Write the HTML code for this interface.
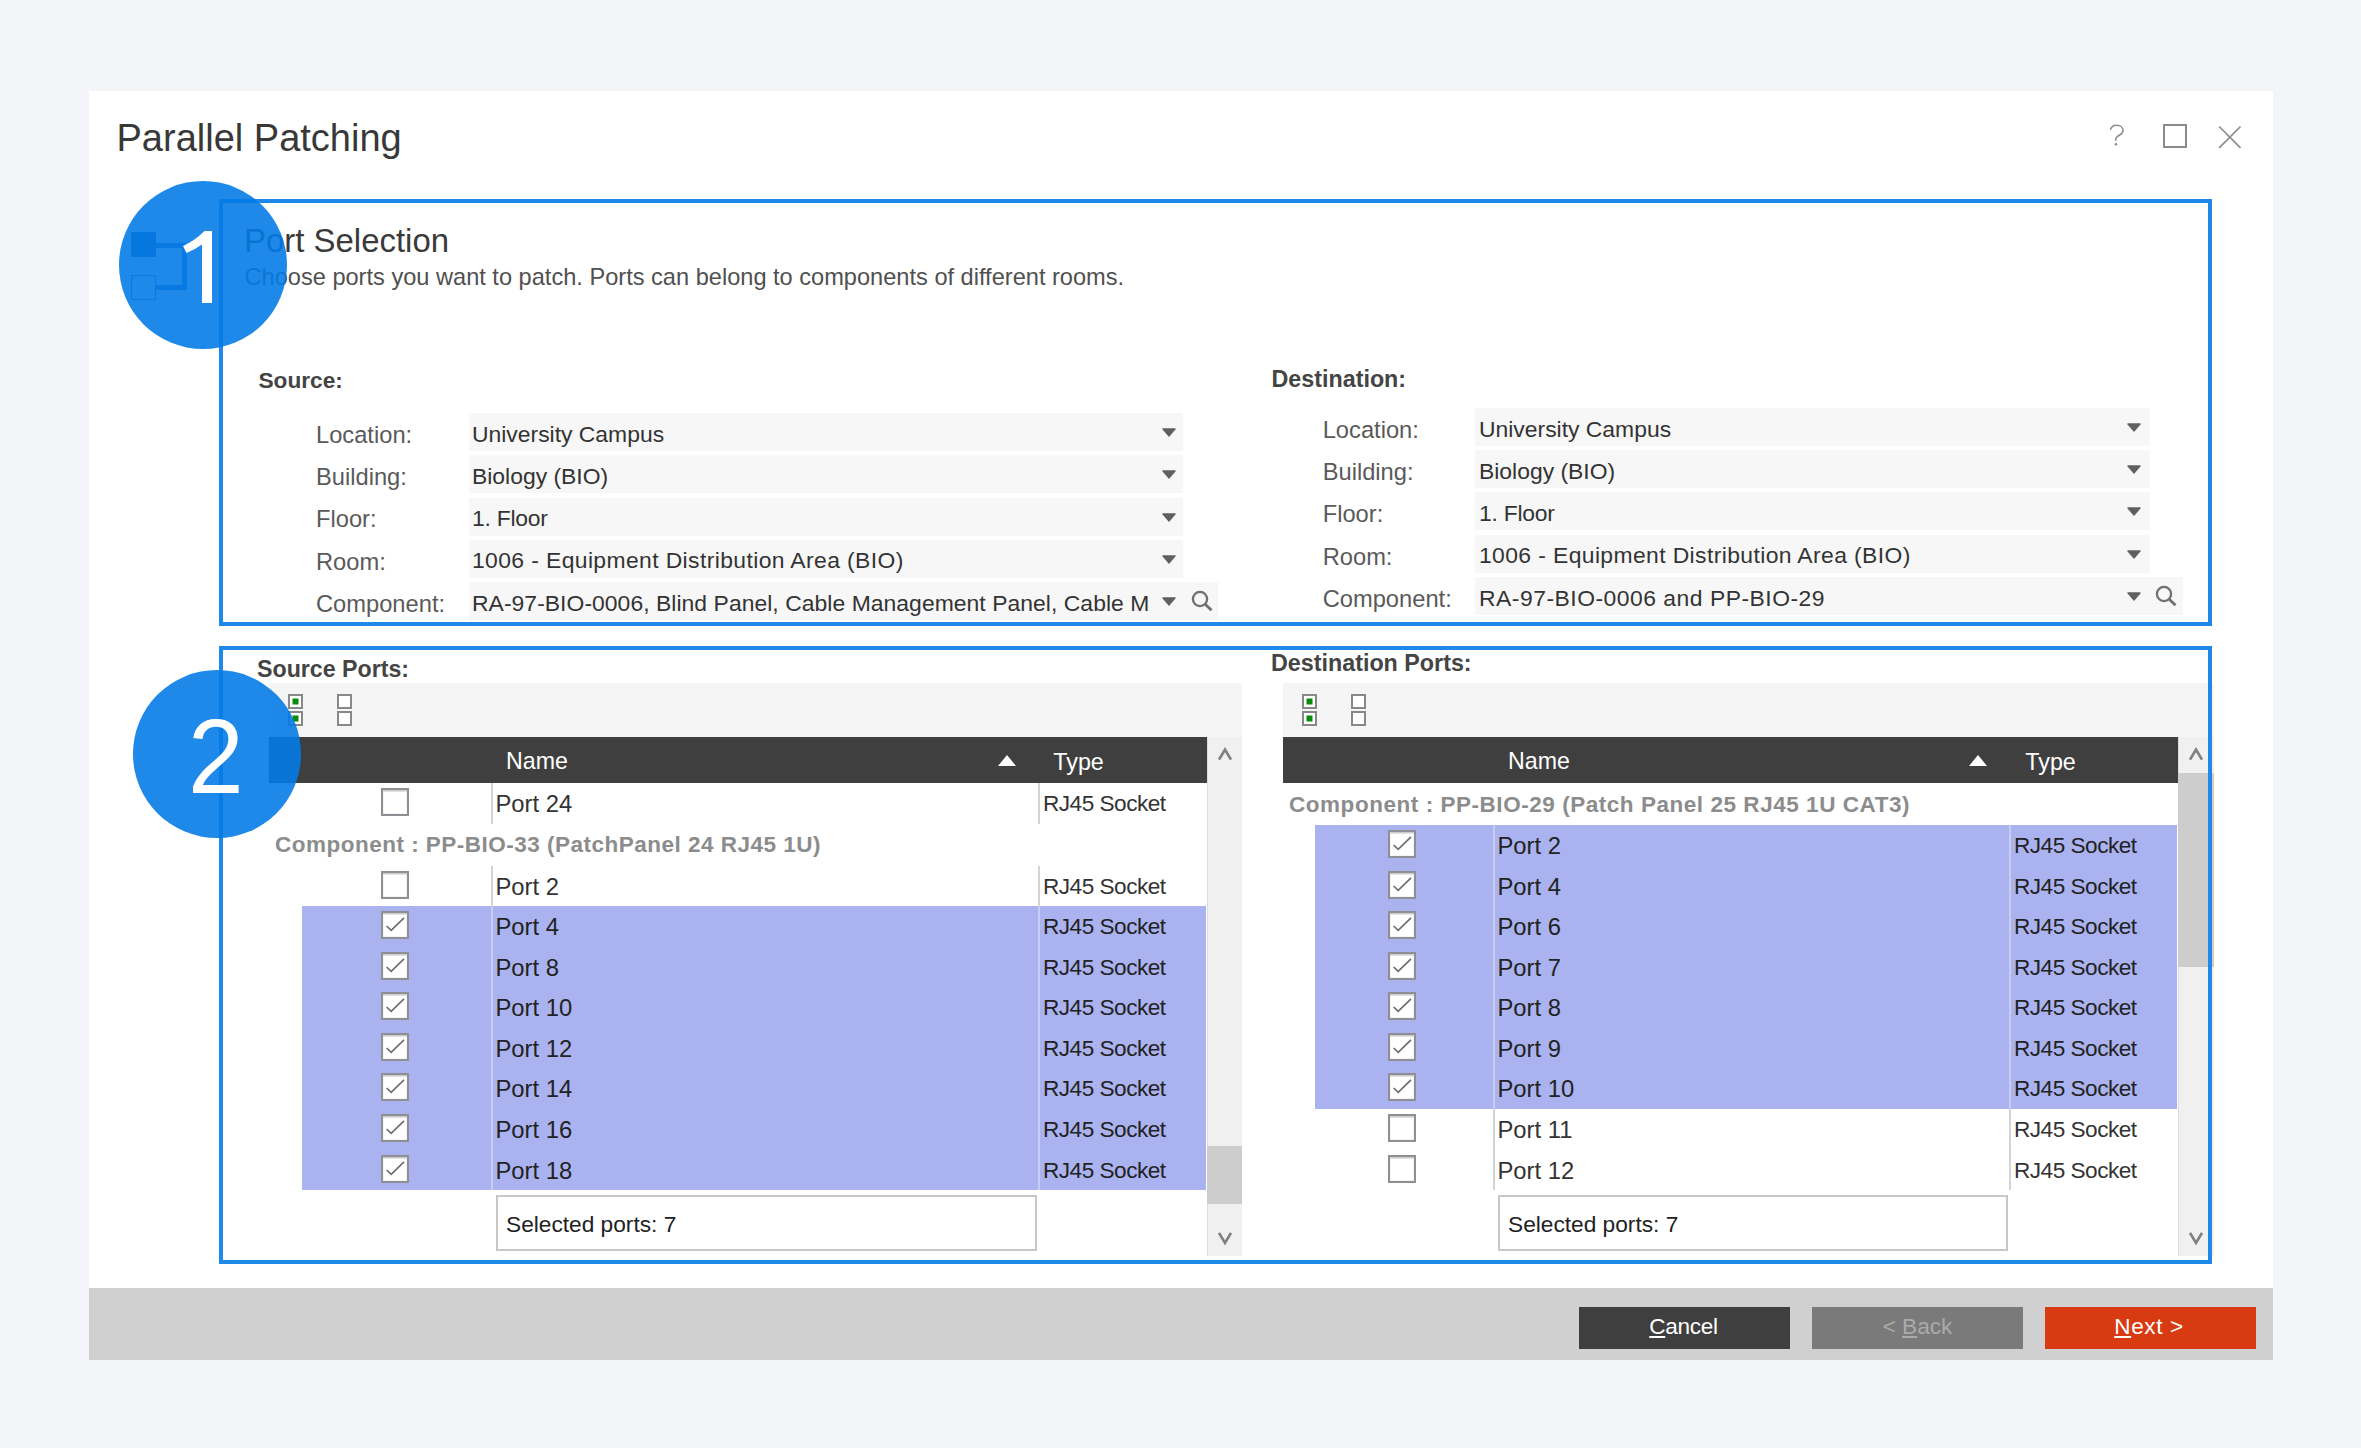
<!DOCTYPE html>
<html><head><meta charset="utf-8"><style>
html,body{margin:0;padding:0;}
body{width:2361px;height:1448px;background:#f4f5f9;position:relative;overflow:hidden;font-family:"Liberation Sans", sans-serif;}
body>div{position:absolute;}
.t{white-space:nowrap;}
u{text-decoration:underline;text-underline-offset:1.5px;text-decoration-thickness:1.6px;}
</style></head><body>
<div style="left:89px;top:91px;width:2184px;height:1269px;background:#ffffff;"></div>
<div style="left:89px;top:1288px;width:2184px;height:72px;background:#d0d0d0;"></div>
<div class="t" style="left:116.5px;top:118.83px;font-size:38.0px;line-height:38.0px;color:#383838;font-weight:400;">Parallel Patching</div>
<svg style="position:absolute;left:2100px;top:115px" width="30" height="40"><path d="M10.3 14.8 C11.3 11.6 13.8 10.2 16.5 10.2 C20.6 10.2 23 12.6 23 15.4 C23 18.6 19.8 19.8 17.5 21.4 C15.9 22.6 15.6 23.6 15.6 25.8" fill="none" stroke="#8c8c8c" stroke-width="1.6"/><circle cx="15.9" cy="29.3" r="1.3" fill="#8c8c8c"/></svg>
<div style="left:2163px;top:124px;width:24px;height:24px;background:transparent;border:2px solid #8a8a8a;box-sizing:border-box"></div>
<svg style="position:absolute;left:2217px;top:125px" width="26" height="24"><path d="M2.2 1.5 L23.5 22.8 M23.5 1.5 L2.2 22.8" stroke="#8c8c8c" stroke-width="1.7"/></svg>
<div class="t" style="left:244px;top:225.41px;font-size:32.95px;line-height:32.95px;color:#3a3a3a;font-weight:400;">Port Selection</div>
<div class="t" style="left:244.5px;top:266.32px;font-size:23.6px;line-height:23.6px;color:#505050;font-weight:400;">Choose ports you want to patch. Ports can belong to components of different rooms.</div>
<div class="t" style="left:258.5px;top:368.83px;font-size:22.65px;line-height:22.65px;color:#444;font-weight:700;">Source:</div>
<div class="t" style="left:1271.5px;top:368.28px;font-size:23.3px;line-height:23.3px;color:#444;font-weight:700;">Destination:</div>
<div class="t" style="left:316px;top:423.94px;font-size:23.7px;line-height:23.7px;color:#5a5a5a;font-weight:400;">Location:</div>
<div class="t" style="left:1322.7px;top:418.94px;font-size:23.7px;line-height:23.7px;color:#5a5a5a;font-weight:400;">Location:</div>
<div style="left:469px;top:413px;width:714px;height:38px;background:#f7f7f7;"></div>
<div style="left:1475px;top:408px;width:675px;height:38px;background:#f7f7f7;"></div>
<div class="t" style="left:472px;top:422.62px;font-size:22.9px;line-height:22.9px;color:#333;font-weight:400;">University Campus</div>
<div class="t" style="left:1479px;top:417.62px;font-size:22.9px;line-height:22.9px;color:#333;font-weight:400;">University Campus</div>
<svg style="position:absolute;left:1162px;top:428px" width="14" height="10"><path d="M0.5 0.3 L13.5 0.3 L13.5 1.6 L7 9 L0.5 1.6 Z" fill="#606060"/></svg>
<svg style="position:absolute;left:2126.5px;top:423px" width="14" height="10"><path d="M0.5 0.3 L13.5 0.3 L13.5 1.6 L7 9 L0.5 1.6 Z" fill="#606060"/></svg>
<div class="t" style="left:316px;top:466.19px;font-size:23.7px;line-height:23.7px;color:#5a5a5a;font-weight:400;">Building:</div>
<div class="t" style="left:1322.7px;top:461.19px;font-size:23.7px;line-height:23.7px;color:#5a5a5a;font-weight:400;">Building:</div>
<div style="left:469px;top:455px;width:714px;height:38px;background:#f7f7f7;"></div>
<div style="left:1475px;top:450px;width:675px;height:38px;background:#f7f7f7;"></div>
<div class="t" style="left:472px;top:464.87px;font-size:22.9px;line-height:22.9px;color:#333;font-weight:400;">Biology (BIO)</div>
<div class="t" style="left:1479px;top:459.87px;font-size:22.9px;line-height:22.9px;color:#333;font-weight:400;">Biology (BIO)</div>
<svg style="position:absolute;left:1162px;top:470px" width="14" height="10"><path d="M0.5 0.3 L13.5 0.3 L13.5 1.6 L7 9 L0.5 1.6 Z" fill="#606060"/></svg>
<svg style="position:absolute;left:2126.5px;top:465px" width="14" height="10"><path d="M0.5 0.3 L13.5 0.3 L13.5 1.6 L7 9 L0.5 1.6 Z" fill="#606060"/></svg>
<div class="t" style="left:316px;top:508.44px;font-size:23.7px;line-height:23.7px;color:#5a5a5a;font-weight:400;">Floor:</div>
<div class="t" style="left:1322.7px;top:503.44px;font-size:23.7px;line-height:23.7px;color:#5a5a5a;font-weight:400;">Floor:</div>
<div style="left:469px;top:498px;width:714px;height:38px;background:#f7f7f7;"></div>
<div style="left:1475px;top:492px;width:675px;height:38px;background:#f7f7f7;"></div>
<div class="t" style="left:472px;top:507.12px;font-size:22.9px;line-height:22.9px;color:#333;font-weight:400;letter-spacing:-0.25px;">1. Floor</div>
<div class="t" style="left:1479px;top:502.12px;font-size:22.9px;line-height:22.9px;color:#333;font-weight:400;letter-spacing:-0.25px;">1. Floor</div>
<svg style="position:absolute;left:1162px;top:513px" width="14" height="10"><path d="M0.5 0.3 L13.5 0.3 L13.5 1.6 L7 9 L0.5 1.6 Z" fill="#606060"/></svg>
<svg style="position:absolute;left:2126.5px;top:507px" width="14" height="10"><path d="M0.5 0.3 L13.5 0.3 L13.5 1.6 L7 9 L0.5 1.6 Z" fill="#606060"/></svg>
<div class="t" style="left:316px;top:550.69px;font-size:23.7px;line-height:23.7px;color:#5a5a5a;font-weight:400;">Room:</div>
<div class="t" style="left:1322.7px;top:545.69px;font-size:23.7px;line-height:23.7px;color:#5a5a5a;font-weight:400;">Room:</div>
<div style="left:469px;top:540px;width:714px;height:38px;background:#f7f7f7;"></div>
<div style="left:1475px;top:535px;width:675px;height:38px;background:#f7f7f7;"></div>
<div class="t" style="left:472px;top:549.37px;font-size:22.9px;line-height:22.9px;color:#333;font-weight:400;letter-spacing:0.39px;">1006 - Equipment Distribution Area (BIO)</div>
<div class="t" style="left:1479px;top:544.37px;font-size:22.9px;line-height:22.9px;color:#333;font-weight:400;letter-spacing:0.39px;">1006 - Equipment Distribution Area (BIO)</div>
<svg style="position:absolute;left:1162px;top:555px" width="14" height="10"><path d="M0.5 0.3 L13.5 0.3 L13.5 1.6 L7 9 L0.5 1.6 Z" fill="#606060"/></svg>
<svg style="position:absolute;left:2126.5px;top:550px" width="14" height="10"><path d="M0.5 0.3 L13.5 0.3 L13.5 1.6 L7 9 L0.5 1.6 Z" fill="#606060"/></svg>
<div class="t" style="left:316px;top:592.94px;font-size:23.7px;line-height:23.7px;color:#5a5a5a;font-weight:400;">Component:</div>
<div class="t" style="left:1322.7px;top:587.94px;font-size:23.7px;line-height:23.7px;color:#5a5a5a;font-weight:400;">Component:</div>
<div style="left:469px;top:582px;width:749px;height:38px;background:#f7f7f7;"></div>
<div style="left:1475px;top:577px;width:708px;height:38px;background:#f7f7f7;"></div>
<div class="t" style="left:472px;top:591.62px;font-size:22.9px;line-height:22.9px;color:#333;font-weight:400;letter-spacing:0.05px;">RA-97-BIO-0006, Blind Panel, Cable Management Panel, Cable M</div>
<div class="t" style="left:1479px;top:586.62px;font-size:22.9px;line-height:22.9px;color:#333;font-weight:400;letter-spacing:0.5px;">RA-97-BIO-0006 and PP-BIO-29</div>
<svg style="position:absolute;left:1162px;top:597px" width="14" height="10"><path d="M0.5 0.3 L13.5 0.3 L13.5 1.6 L7 9 L0.5 1.6 Z" fill="#606060"/></svg>
<svg style="position:absolute;left:2126.5px;top:592px" width="14" height="10"><path d="M0.5 0.3 L13.5 0.3 L13.5 1.6 L7 9 L0.5 1.6 Z" fill="#606060"/></svg>
<svg style="position:absolute;left:1191px;top:590px" width="24" height="24"><circle cx="9" cy="9" r="7.1" fill="none" stroke="#707070" stroke-width="2.3"/><path d="M14.2 14.2 L20.5 20.3" stroke="#707070" stroke-width="2.8"/></svg>
<svg style="position:absolute;left:2155px;top:585px" width="24" height="24"><circle cx="9" cy="9" r="7.1" fill="none" stroke="#707070" stroke-width="2.3"/><path d="M14.2 14.2 L20.5 20.3" stroke="#707070" stroke-width="2.8"/></svg>
<div style="left:219px;top:199px;width:1993px;height:427px;background:transparent;border:4px solid #1e89e8;box-sizing:border-box"></div>
<div style="left:219px;top:646px;width:1993px;height:618px;background:transparent;border:4px solid #1e89e8;box-sizing:border-box"></div>
<div class="t" style="left:257px;top:658.36px;font-size:23.2px;line-height:23.2px;color:#444;font-weight:700;">Source Ports:</div>
<div class="t" style="left:1271px;top:651.78px;font-size:23.3px;line-height:23.3px;color:#444;font-weight:700;">Destination Ports:</div>
<div style="left:269px;top:683px;width:973px;height:55px;background:#f5f5f5;"></div>
<svg style="position:absolute;left:288px;top:693.7px" width="16" height="33"><rect x="1" y="1" width="13" height="13" fill="#fff" stroke="#888" stroke-width="2"/><rect x="4.5" y="4.5" width="6" height="6" fill="#0a8a0a"/><rect x="1" y="18" width="13" height="13" fill="#fff" stroke="#888" stroke-width="2"/><rect x="4.5" y="21.5" width="6" height="6" fill="#0a8a0a"/></svg>
<svg style="position:absolute;left:337px;top:693.7px" width="16" height="33"><rect x="1" y="1" width="13" height="13" fill="#fff" stroke="#888" stroke-width="2"/><rect x="1" y="18" width="13" height="13" fill="#fff" stroke="#888" stroke-width="2"/></svg>
<div style="left:269px;top:737px;width:938px;height:46px;background:#3f3f3f;"></div>
<div class="t" style="left:506px;top:749.86px;font-size:23.2px;line-height:23.2px;color:#fff;font-weight:400;">Name</div>
<div class="t" style="left:1053.3px;top:750.68px;font-size:23.3px;line-height:23.3px;color:#fff;font-weight:400;">Type</div>
<svg style="position:absolute;left:997px;top:753px" width="20" height="14"><path d="M1 13 L19 13 L10 2 Z" fill="#fff"/></svg>
<div style="left:1207px;top:737px;width:35px;height:519px;background:#f0f0f0;"></div>
<div style="left:1207px;top:737px;width:1px;height:519px;background:#dcdcdc;"></div>
<div style="left:1207px;top:1146px;width:35px;height:58px;background:#cdcdcd;"></div>
<svg style="position:absolute;left:1216.5px;top:746px" width="16" height="16"><path d="M2 13.6 L8 3.6 L14 13.6" fill="none" stroke="#808080" stroke-width="2.7"/></svg>
<svg style="position:absolute;left:1216.5px;top:1231px" width="16" height="16"><path d="M2 1.9 L8 11.9 L14 1.9" fill="none" stroke="#808080" stroke-width="2.7"/></svg>
<div style="left:490.5px;top:783px;width:2px;height:40.5px;background:#d4d4d4;"></div>
<div style="left:1038px;top:783px;width:2px;height:40.5px;background:#d4d4d4;"></div>
<svg style="position:absolute;left:381px;top:788px" width="28" height="28"><rect x="1" y="1" width="26" height="26" fill="#fff" stroke="#8f8f96" stroke-width="2.2"/><rect x="2.2" y="2.2" width="23.6" height="1.3" fill="#c4c4c4"/></svg>
<div class="t" style="left:495.5px;top:791.65px;font-size:23.8px;line-height:23.8px;color:#333;font-weight:400;">Port 24</div>
<div class="t" style="left:1043px;top:792.67px;font-size:22.6px;line-height:22.6px;color:#333;font-weight:400;letter-spacing:-0.5px;">RJ45 Socket</div>
<div class="t" style="left:275px;top:834.45px;font-size:22.5px;line-height:22.5px;color:#8c8c8c;font-weight:700;letter-spacing:0.49px;">Component : PP-BIO-33 (PatchPanel 24 RJ45 1U)</div>
<div style="left:490.5px;top:866px;width:2px;height:40px;background:#d4d4d4;"></div>
<div style="left:1038px;top:866px;width:2px;height:40px;background:#d4d4d4;"></div>
<svg style="position:absolute;left:381px;top:871px" width="28" height="28"><rect x="1" y="1" width="26" height="26" fill="#fff" stroke="#8f8f96" stroke-width="2.2"/><rect x="2.2" y="2.2" width="23.6" height="1.3" fill="#c4c4c4"/></svg>
<div class="t" style="left:495.5px;top:874.65px;font-size:23.8px;line-height:23.8px;color:#333;font-weight:400;">Port 2</div>
<div class="t" style="left:1043px;top:875.67px;font-size:22.6px;line-height:22.6px;color:#333;font-weight:400;letter-spacing:-0.5px;">RJ45 Socket</div>
<div style="left:302px;top:906px;width:904px;height:41px;background:#aab3f0;"></div>
<div style="left:490.5px;top:906px;width:2px;height:41px;background:#c9cdf0;"></div>
<div style="left:1038px;top:906px;width:2px;height:41px;background:#c9cdf0;"></div>
<svg style="position:absolute;left:381px;top:911px" width="28" height="28"><rect x="1" y="1" width="26" height="26" fill="#fff" stroke="#8f8f96" stroke-width="2.2"/><rect x="2.2" y="2.2" width="23.6" height="1.3" fill="#c4c4c4"/><path d="M5.6 15 L10.2 19.3 L23 6.8" fill="none" stroke="#6e6e6e" stroke-width="1.7"/></svg>
<div class="t" style="left:495.5px;top:914.65px;font-size:23.8px;line-height:23.8px;color:#222;font-weight:400;">Port 4</div>
<div class="t" style="left:1043px;top:915.67px;font-size:22.6px;line-height:22.6px;color:#222;font-weight:400;letter-spacing:-0.5px;">RJ45 Socket</div>
<div style="left:302px;top:947px;width:904px;height:40px;background:#aab3f0;"></div>
<div style="left:490.5px;top:947px;width:2px;height:40px;background:#c9cdf0;"></div>
<div style="left:1038px;top:947px;width:2px;height:40px;background:#c9cdf0;"></div>
<svg style="position:absolute;left:381px;top:952px" width="28" height="28"><rect x="1" y="1" width="26" height="26" fill="#fff" stroke="#8f8f96" stroke-width="2.2"/><rect x="2.2" y="2.2" width="23.6" height="1.3" fill="#c4c4c4"/><path d="M5.6 15 L10.2 19.3 L23 6.8" fill="none" stroke="#6e6e6e" stroke-width="1.7"/></svg>
<div class="t" style="left:495.5px;top:955.65px;font-size:23.8px;line-height:23.8px;color:#222;font-weight:400;">Port 8</div>
<div class="t" style="left:1043px;top:956.67px;font-size:22.6px;line-height:22.6px;color:#222;font-weight:400;letter-spacing:-0.5px;">RJ45 Socket</div>
<div style="left:302px;top:987px;width:904px;height:41px;background:#aab3f0;"></div>
<div style="left:490.5px;top:987px;width:2px;height:41px;background:#c9cdf0;"></div>
<div style="left:1038px;top:987px;width:2px;height:41px;background:#c9cdf0;"></div>
<svg style="position:absolute;left:381px;top:992px" width="28" height="28"><rect x="1" y="1" width="26" height="26" fill="#fff" stroke="#8f8f96" stroke-width="2.2"/><rect x="2.2" y="2.2" width="23.6" height="1.3" fill="#c4c4c4"/><path d="M5.6 15 L10.2 19.3 L23 6.8" fill="none" stroke="#6e6e6e" stroke-width="1.7"/></svg>
<div class="t" style="left:495.5px;top:995.65px;font-size:23.8px;line-height:23.8px;color:#222;font-weight:400;">Port 10</div>
<div class="t" style="left:1043px;top:996.67px;font-size:22.6px;line-height:22.6px;color:#222;font-weight:400;letter-spacing:-0.5px;">RJ45 Socket</div>
<div style="left:302px;top:1028px;width:904px;height:40px;background:#aab3f0;"></div>
<div style="left:490.5px;top:1028px;width:2px;height:40px;background:#c9cdf0;"></div>
<div style="left:1038px;top:1028px;width:2px;height:40px;background:#c9cdf0;"></div>
<svg style="position:absolute;left:381px;top:1033px" width="28" height="28"><rect x="1" y="1" width="26" height="26" fill="#fff" stroke="#8f8f96" stroke-width="2.2"/><rect x="2.2" y="2.2" width="23.6" height="1.3" fill="#c4c4c4"/><path d="M5.6 15 L10.2 19.3 L23 6.8" fill="none" stroke="#6e6e6e" stroke-width="1.7"/></svg>
<div class="t" style="left:495.5px;top:1036.65px;font-size:23.8px;line-height:23.8px;color:#222;font-weight:400;">Port 12</div>
<div class="t" style="left:1043px;top:1037.67px;font-size:22.6px;line-height:22.6px;color:#222;font-weight:400;letter-spacing:-0.5px;">RJ45 Socket</div>
<div style="left:302px;top:1068px;width:904px;height:41px;background:#aab3f0;"></div>
<div style="left:490.5px;top:1068px;width:2px;height:41px;background:#c9cdf0;"></div>
<div style="left:1038px;top:1068px;width:2px;height:41px;background:#c9cdf0;"></div>
<svg style="position:absolute;left:381px;top:1073px" width="28" height="28"><rect x="1" y="1" width="26" height="26" fill="#fff" stroke="#8f8f96" stroke-width="2.2"/><rect x="2.2" y="2.2" width="23.6" height="1.3" fill="#c4c4c4"/><path d="M5.6 15 L10.2 19.3 L23 6.8" fill="none" stroke="#6e6e6e" stroke-width="1.7"/></svg>
<div class="t" style="left:495.5px;top:1076.65px;font-size:23.8px;line-height:23.8px;color:#222;font-weight:400;">Port 14</div>
<div class="t" style="left:1043px;top:1077.67px;font-size:22.6px;line-height:22.6px;color:#222;font-weight:400;letter-spacing:-0.5px;">RJ45 Socket</div>
<div style="left:302px;top:1109px;width:904px;height:41px;background:#aab3f0;"></div>
<div style="left:490.5px;top:1109px;width:2px;height:41px;background:#c9cdf0;"></div>
<div style="left:1038px;top:1109px;width:2px;height:41px;background:#c9cdf0;"></div>
<svg style="position:absolute;left:381px;top:1114px" width="28" height="28"><rect x="1" y="1" width="26" height="26" fill="#fff" stroke="#8f8f96" stroke-width="2.2"/><rect x="2.2" y="2.2" width="23.6" height="1.3" fill="#c4c4c4"/><path d="M5.6 15 L10.2 19.3 L23 6.8" fill="none" stroke="#6e6e6e" stroke-width="1.7"/></svg>
<div class="t" style="left:495.5px;top:1117.65px;font-size:23.8px;line-height:23.8px;color:#222;font-weight:400;">Port 16</div>
<div class="t" style="left:1043px;top:1118.67px;font-size:22.6px;line-height:22.6px;color:#222;font-weight:400;letter-spacing:-0.5px;">RJ45 Socket</div>
<div style="left:302px;top:1150px;width:904px;height:40px;background:#aab3f0;"></div>
<div style="left:490.5px;top:1150px;width:2px;height:40px;background:#c9cdf0;"></div>
<div style="left:1038px;top:1150px;width:2px;height:40px;background:#c9cdf0;"></div>
<svg style="position:absolute;left:381px;top:1155px" width="28" height="28"><rect x="1" y="1" width="26" height="26" fill="#fff" stroke="#8f8f96" stroke-width="2.2"/><rect x="2.2" y="2.2" width="23.6" height="1.3" fill="#c4c4c4"/><path d="M5.6 15 L10.2 19.3 L23 6.8" fill="none" stroke="#6e6e6e" stroke-width="1.7"/></svg>
<div class="t" style="left:495.5px;top:1158.65px;font-size:23.8px;line-height:23.8px;color:#222;font-weight:400;">Port 18</div>
<div class="t" style="left:1043px;top:1159.67px;font-size:22.6px;line-height:22.6px;color:#222;font-weight:400;letter-spacing:-0.5px;">RJ45 Socket</div>
<div style="left:496px;top:1195px;width:541px;height:56px;background:#fff;border:2px solid #c8c8c8;box-sizing:border-box"></div>
<div class="t" style="left:506px;top:1212.78px;font-size:22.7px;line-height:22.7px;color:#222;font-weight:400;">Selected ports: 7</div>
<div style="left:1283px;top:683px;width:931px;height:55px;background:#f5f5f5;"></div>
<svg style="position:absolute;left:1302px;top:693.7px" width="16" height="33"><rect x="1" y="1" width="13" height="13" fill="#fff" stroke="#888" stroke-width="2"/><rect x="4.5" y="4.5" width="6" height="6" fill="#0a8a0a"/><rect x="1" y="18" width="13" height="13" fill="#fff" stroke="#888" stroke-width="2"/><rect x="4.5" y="21.5" width="6" height="6" fill="#0a8a0a"/></svg>
<svg style="position:absolute;left:1351px;top:693.7px" width="16" height="33"><rect x="1" y="1" width="13" height="13" fill="#fff" stroke="#888" stroke-width="2"/><rect x="1" y="18" width="13" height="13" fill="#fff" stroke="#888" stroke-width="2"/></svg>
<div style="left:1283px;top:737px;width:895px;height:46px;background:#3f3f3f;"></div>
<div class="t" style="left:1508px;top:749.86px;font-size:23.2px;line-height:23.2px;color:#fff;font-weight:400;">Name</div>
<div class="t" style="left:2025.3px;top:750.68px;font-size:23.3px;line-height:23.3px;color:#fff;font-weight:400;">Type</div>
<svg style="position:absolute;left:1968px;top:753px" width="20" height="14"><path d="M1 13 L19 13 L10 2 Z" fill="#fff"/></svg>
<div style="left:2178px;top:737px;width:36px;height:519px;background:#f0f0f0;"></div>
<div style="left:2178px;top:737px;width:1px;height:519px;background:#dcdcdc;"></div>
<div style="left:2178px;top:773px;width:36px;height:194px;background:#cdcdcd;"></div>
<svg style="position:absolute;left:2188.0px;top:746px" width="16" height="16"><path d="M2 13.6 L8 3.6 L14 13.6" fill="none" stroke="#808080" stroke-width="2.7"/></svg>
<svg style="position:absolute;left:2188.0px;top:1231px" width="16" height="16"><path d="M2 1.9 L8 11.9 L14 1.9" fill="none" stroke="#808080" stroke-width="2.7"/></svg>
<div class="t" style="left:1289px;top:793.95px;font-size:22.5px;line-height:22.5px;color:#8c8c8c;font-weight:700;letter-spacing:0.54px;">Component : PP-BIO-29 (Patch Panel 25 RJ45 1U CAT3)</div>
<div style="left:1315px;top:825px;width:862px;height:41px;background:#aab3f0;"></div>
<div style="left:1492.5px;top:825px;width:2px;height:41px;background:#c9cdf0;"></div>
<div style="left:2009px;top:825px;width:2px;height:41px;background:#c9cdf0;"></div>
<svg style="position:absolute;left:1388px;top:830px" width="28" height="28"><rect x="1" y="1" width="26" height="26" fill="#fff" stroke="#8f8f96" stroke-width="2.2"/><rect x="2.2" y="2.2" width="23.6" height="1.3" fill="#c4c4c4"/><path d="M5.6 15 L10.2 19.3 L23 6.8" fill="none" stroke="#6e6e6e" stroke-width="1.7"/></svg>
<div class="t" style="left:1497.5px;top:833.65px;font-size:23.8px;line-height:23.8px;color:#222;font-weight:400;">Port 2</div>
<div class="t" style="left:2014px;top:834.67px;font-size:22.6px;line-height:22.6px;color:#222;font-weight:400;letter-spacing:-0.5px;">RJ45 Socket</div>
<div style="left:1315px;top:866px;width:862px;height:40px;background:#aab3f0;"></div>
<div style="left:1492.5px;top:866px;width:2px;height:40px;background:#c9cdf0;"></div>
<div style="left:2009px;top:866px;width:2px;height:40px;background:#c9cdf0;"></div>
<svg style="position:absolute;left:1388px;top:871px" width="28" height="28"><rect x="1" y="1" width="26" height="26" fill="#fff" stroke="#8f8f96" stroke-width="2.2"/><rect x="2.2" y="2.2" width="23.6" height="1.3" fill="#c4c4c4"/><path d="M5.6 15 L10.2 19.3 L23 6.8" fill="none" stroke="#6e6e6e" stroke-width="1.7"/></svg>
<div class="t" style="left:1497.5px;top:874.65px;font-size:23.8px;line-height:23.8px;color:#222;font-weight:400;">Port 4</div>
<div class="t" style="left:2014px;top:875.67px;font-size:22.6px;line-height:22.6px;color:#222;font-weight:400;letter-spacing:-0.5px;">RJ45 Socket</div>
<div style="left:1315px;top:906px;width:862px;height:41px;background:#aab3f0;"></div>
<div style="left:1492.5px;top:906px;width:2px;height:41px;background:#c9cdf0;"></div>
<div style="left:2009px;top:906px;width:2px;height:41px;background:#c9cdf0;"></div>
<svg style="position:absolute;left:1388px;top:911px" width="28" height="28"><rect x="1" y="1" width="26" height="26" fill="#fff" stroke="#8f8f96" stroke-width="2.2"/><rect x="2.2" y="2.2" width="23.6" height="1.3" fill="#c4c4c4"/><path d="M5.6 15 L10.2 19.3 L23 6.8" fill="none" stroke="#6e6e6e" stroke-width="1.7"/></svg>
<div class="t" style="left:1497.5px;top:914.65px;font-size:23.8px;line-height:23.8px;color:#222;font-weight:400;">Port 6</div>
<div class="t" style="left:2014px;top:915.67px;font-size:22.6px;line-height:22.6px;color:#222;font-weight:400;letter-spacing:-0.5px;">RJ45 Socket</div>
<div style="left:1315px;top:947px;width:862px;height:40px;background:#aab3f0;"></div>
<div style="left:1492.5px;top:947px;width:2px;height:40px;background:#c9cdf0;"></div>
<div style="left:2009px;top:947px;width:2px;height:40px;background:#c9cdf0;"></div>
<svg style="position:absolute;left:1388px;top:952px" width="28" height="28"><rect x="1" y="1" width="26" height="26" fill="#fff" stroke="#8f8f96" stroke-width="2.2"/><rect x="2.2" y="2.2" width="23.6" height="1.3" fill="#c4c4c4"/><path d="M5.6 15 L10.2 19.3 L23 6.8" fill="none" stroke="#6e6e6e" stroke-width="1.7"/></svg>
<div class="t" style="left:1497.5px;top:955.65px;font-size:23.8px;line-height:23.8px;color:#222;font-weight:400;">Port 7</div>
<div class="t" style="left:2014px;top:956.67px;font-size:22.6px;line-height:22.6px;color:#222;font-weight:400;letter-spacing:-0.5px;">RJ45 Socket</div>
<div style="left:1315px;top:987px;width:862px;height:41px;background:#aab3f0;"></div>
<div style="left:1492.5px;top:987px;width:2px;height:41px;background:#c9cdf0;"></div>
<div style="left:2009px;top:987px;width:2px;height:41px;background:#c9cdf0;"></div>
<svg style="position:absolute;left:1388px;top:992px" width="28" height="28"><rect x="1" y="1" width="26" height="26" fill="#fff" stroke="#8f8f96" stroke-width="2.2"/><rect x="2.2" y="2.2" width="23.6" height="1.3" fill="#c4c4c4"/><path d="M5.6 15 L10.2 19.3 L23 6.8" fill="none" stroke="#6e6e6e" stroke-width="1.7"/></svg>
<div class="t" style="left:1497.5px;top:995.65px;font-size:23.8px;line-height:23.8px;color:#222;font-weight:400;">Port 8</div>
<div class="t" style="left:2014px;top:996.67px;font-size:22.6px;line-height:22.6px;color:#222;font-weight:400;letter-spacing:-0.5px;">RJ45 Socket</div>
<div style="left:1315px;top:1028px;width:862px;height:40px;background:#aab3f0;"></div>
<div style="left:1492.5px;top:1028px;width:2px;height:40px;background:#c9cdf0;"></div>
<div style="left:2009px;top:1028px;width:2px;height:40px;background:#c9cdf0;"></div>
<svg style="position:absolute;left:1388px;top:1033px" width="28" height="28"><rect x="1" y="1" width="26" height="26" fill="#fff" stroke="#8f8f96" stroke-width="2.2"/><rect x="2.2" y="2.2" width="23.6" height="1.3" fill="#c4c4c4"/><path d="M5.6 15 L10.2 19.3 L23 6.8" fill="none" stroke="#6e6e6e" stroke-width="1.7"/></svg>
<div class="t" style="left:1497.5px;top:1036.65px;font-size:23.8px;line-height:23.8px;color:#222;font-weight:400;">Port 9</div>
<div class="t" style="left:2014px;top:1037.67px;font-size:22.6px;line-height:22.6px;color:#222;font-weight:400;letter-spacing:-0.5px;">RJ45 Socket</div>
<div style="left:1315px;top:1068px;width:862px;height:41px;background:#aab3f0;"></div>
<div style="left:1492.5px;top:1068px;width:2px;height:41px;background:#c9cdf0;"></div>
<div style="left:2009px;top:1068px;width:2px;height:41px;background:#c9cdf0;"></div>
<svg style="position:absolute;left:1388px;top:1073px" width="28" height="28"><rect x="1" y="1" width="26" height="26" fill="#fff" stroke="#8f8f96" stroke-width="2.2"/><rect x="2.2" y="2.2" width="23.6" height="1.3" fill="#c4c4c4"/><path d="M5.6 15 L10.2 19.3 L23 6.8" fill="none" stroke="#6e6e6e" stroke-width="1.7"/></svg>
<div class="t" style="left:1497.5px;top:1076.65px;font-size:23.8px;line-height:23.8px;color:#222;font-weight:400;">Port 10</div>
<div class="t" style="left:2014px;top:1077.67px;font-size:22.6px;line-height:22.6px;color:#222;font-weight:400;letter-spacing:-0.5px;">RJ45 Socket</div>
<div style="left:1492.5px;top:1109px;width:2px;height:41px;background:#d4d4d4;"></div>
<div style="left:2009px;top:1109px;width:2px;height:41px;background:#d4d4d4;"></div>
<svg style="position:absolute;left:1388px;top:1114px" width="28" height="28"><rect x="1" y="1" width="26" height="26" fill="#fff" stroke="#8f8f96" stroke-width="2.2"/><rect x="2.2" y="2.2" width="23.6" height="1.3" fill="#c4c4c4"/></svg>
<div class="t" style="left:1497.5px;top:1117.65px;font-size:23.8px;line-height:23.8px;color:#333;font-weight:400;">Port 11</div>
<div class="t" style="left:2014px;top:1118.67px;font-size:22.6px;line-height:22.6px;color:#333;font-weight:400;letter-spacing:-0.5px;">RJ45 Socket</div>
<div style="left:1492.5px;top:1150px;width:2px;height:40px;background:#d4d4d4;"></div>
<div style="left:2009px;top:1150px;width:2px;height:40px;background:#d4d4d4;"></div>
<svg style="position:absolute;left:1388px;top:1155px" width="28" height="28"><rect x="1" y="1" width="26" height="26" fill="#fff" stroke="#8f8f96" stroke-width="2.2"/><rect x="2.2" y="2.2" width="23.6" height="1.3" fill="#c4c4c4"/></svg>
<div class="t" style="left:1497.5px;top:1158.65px;font-size:23.8px;line-height:23.8px;color:#333;font-weight:400;">Port 12</div>
<div class="t" style="left:2014px;top:1159.67px;font-size:22.6px;line-height:22.6px;color:#333;font-weight:400;letter-spacing:-0.5px;">RJ45 Socket</div>
<div style="left:1498px;top:1195px;width:510px;height:56px;background:#fff;border:2px solid #c8c8c8;box-sizing:border-box"></div>
<div class="t" style="left:1508px;top:1212.78px;font-size:22.7px;line-height:22.7px;color:#222;font-weight:400;">Selected ports: 7</div>
<div style="left:2208px;top:646px;width:4px;height:618px;background:#1e89e8;"></div>
<div style="left:131px;top:232px;width:25px;height:25px;background:#1b5fb0;"></div>
<div style="left:131px;top:275px;width:25px;height:25px;background:transparent;border:1.5px solid #3a78c8;box-sizing:border-box"></div>
<div style="left:156px;top:243px;width:31px;height:5px;background:#2a70c8;"></div>
<div style="left:182px;top:243px;width:5px;height:47px;background:#2a70c8;"></div>
<div style="left:156px;top:285px;width:31px;height:5px;background:#2a70c8;"></div>
<div style="left:119px;top:181px;width:168px;height:168px;border-radius:50%;background:rgba(2,122,229,0.89)"></div>
<div class="t" style="left:178px;top:218.35px;font-size:100px;line-height:100px;color:#fff;font-weight:400;"></div>
<svg style="position:absolute;left:0;top:0" width="400" height="400"><path d="M204.5 231 L212 231 L212 303 L202 303 L202 244.5 Q195 249.5 186.5 253 L183 246 Q195 240.5 204.5 231 Z" fill="#fff"/></svg>
<div style="left:133px;top:670px;width:168px;height:168px;border-radius:50%;background:rgba(2,122,229,0.89)"></div>
<div class="t" style="left:189px;top:708.35px;font-size:100px;line-height:100px;color:#fff;font-weight:400;"></div>
<div class="t" style="left:188px;top:708.35px;font-size:100px;line-height:100px;color:#fff;font-weight:400;transform:scaleY(1.057);transform-origin:0 84.65px">2</div>
<div style="left:1579px;top:1307px;width:211px;height:42px;background:#3f3f3f;"></div>
<div class="t" style="left:1578px;top:1316.27px;font-size:22.6px;line-height:22.6px;color:#fff;font-weight:400;letter-spacing:-0.3px;width:211px;text-align:center"><u>C</u>ancel</div>
<div style="left:1812px;top:1307px;width:211px;height:42px;background:#7a7a7a;"></div>
<div class="t" style="left:1812px;top:1316.27px;font-size:22.6px;line-height:22.6px;color:#aaaaaa;font-weight:400;width:211px;text-align:center">&lt; <u>B</u>ack</div>
<div style="left:2045px;top:1307px;width:211px;height:42px;background:#d83b12;"></div>
<div class="t" style="left:2043.5px;top:1316.27px;font-size:22.6px;line-height:22.6px;color:#fff;font-weight:400;letter-spacing:0.6px;width:211px;text-align:center"><u>N</u>ext &gt;</div>
</body></html>
